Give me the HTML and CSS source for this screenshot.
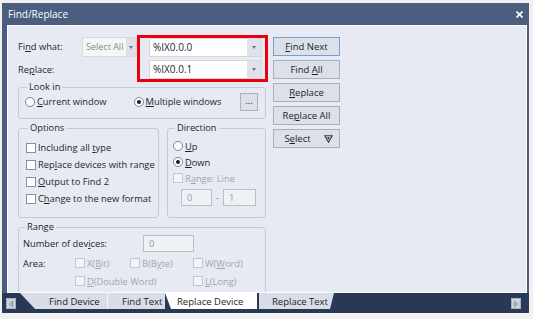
FILE: index.html
```html
<!DOCTYPE html>
<html lang="en">
<head>
  <meta charset="UTF-8">
  <title>Find/Replace</title>
  <link rel="stylesheet" href="styles.css">
</head>
<body>
  <div class="window">
    <div class="titlebar">
      <span class="title">Find/Replace</span>
      <svg class="close" width="7" height="7" viewBox="0 0 7 7"><path d="M0.5 0.5L6.5 6.5M6.5 0.5L0.5 6.5" stroke="#fff" stroke-width="1.6"/></svg>
    </div>

    <div class="client">
      <div class="main">
        <div class="left">
          <div class="search">
            <label class="lbl lbl-find">Fi<u>n</u>d what:</label>
            <div class="combo combo-off">
              <span class="combo-text">Select All</span>
              <span class="combo-btn"><i class="tri"></i></span>
            </div>
            <div class="redbox">
              <div class="combo">
                <span class="combo-text">%IX0.0.0</span>
                <span class="combo-btn"><i class="tri"></i></span>
              </div>
              <div class="combo">
                <span class="combo-text">%IX0.0.1</span>
                <span class="combo-btn"><i class="tri"></i></span>
              </div>
            </div>
            <label class="lbl lbl-replace">Re<u>p</u>lace:</label>
          </div>

          <fieldset class="group lookin">
            <legend>Look in</legend>
            <div class="lookin-row">
              <span class="opt"><i class="radio"></i><span><u>C</u>urrent window</span></span>
              <span class="opt opt-multi"><i class="radio on"></i><span><u>M</u>ultiple windows</span></span>
              <span class="dots">...</span>
            </div>
          </fieldset>

          <div class="pair">
            <fieldset class="group options">
              <legend>Options</legend>
              <div class="line"><i class="check"></i><span>Including all <u>t</u>ype</span></div>
              <div class="line"><i class="check"></i><span>Rep<u>l</u>ace devices with range</span></div>
              <div class="line"><i class="check"></i><span><u>O</u>utput to Find 2</span></div>
              <div class="line"><i class="check"></i><span>C<u>h</u>ange to the new format</span></div>
            </fieldset>
            <fieldset class="group direction">
              <legend>Direction</legend>
              <div class="dline"><i class="radio"></i><span><u>U</u>p</span></div>
              <div class="dline"><i class="radio on"></i><span><u>D</u>own</span></div>
              <div class="dline off"><i class="check check-off"></i><span>R<u>a</u>nge: Line</span></div>
              <div class="span-row">
                <span class="tbox tbox-a">0</span>
                <span class="dash">-</span>
                <span class="tbox tbox-b">1</span>
              </div>
            </fieldset>
          </div>

          <fieldset class="group range">
            <legend>Range</legend>
            <div class="count-row">
              <span class="count-lbl">Number of dev<u>i</u>ces:</span>
              <span class="tbox tbox-count">0</span>
            </div>
            <div class="area-row">
              <span class="area-lbl">Area:</span>
              <span class="area-item w55"><i class="check check-off"></i><span>X(<u>B</u>it)</span></span>
              <span class="area-item w63"><i class="check check-off"></i><span>B(B<u>y</u>te)</span></span>
              <span class="area-item"><i class="check check-off"></i><span>W(<u>W</u>ord)</span></span>
            </div>
            <div class="area-row">
              <span class="area-lbl"></span>
              <span class="area-item w118"><i class="check check-off"></i><span><u>D</u>(Double Word)</span></span>
              <span class="area-item"><i class="check check-off"></i><span><u>L</u>(Long)</span></span>
            </div>
          </fieldset>
        </div>

        <div class="buttons">
          <button class="btn btn-default"><u>F</u>ind Next</button>
          <button class="btn">Find <u>A</u>ll</button>
          <button class="btn"><u>R</u>eplace</button>
          <button class="btn">Re<u>p</u>lace All</button>
          <button class="btn btn-select"><span>S<u>e</u>lect</span>
            <svg width="9" height="8" viewBox="0 0 9 8"><path d="M0.8 0.8H8.2L4.5 7.2Z" fill="none" stroke="#333" stroke-width="1.1"/><path d="M3 2.2H6L4.5 4.8Z" fill="#333"/></svg>
          </button>
        </div>
      </div>
    </div>

    <div class="tabstrip">
      <span class="arrow"><svg width="4" height="6" viewBox="0 0 4 6"><path d="M3.5 0.5V5.5L0.5 3Z" fill="none" stroke="#7b8494" stroke-width="0.9"/></svg></span>
      <div class="tabs">
        <span class="tab tab-first">Find Device</span>
        <span class="tab tab-text">Find Text</span>
        <span class="tab tab-active">Replace Device</span>
        <span class="tab tab-last">Replace Text</span>
      </div>
      <span class="arrow arrow-right"><svg width="4" height="6" viewBox="0 0 4 6"><path d="M0.5 0.5V5.5L3.5 3Z" fill="none" stroke="#7b8494" stroke-width="0.9"/></svg></span>
    </div>
  </div>
</body>
</html>
```

FILE: styles.css
```css
* {
  box-sizing: border-box;
}
body {
  margin: 0;
  background: #f1f1f1;
  font-family: 'Open Sans', 'Noto Sans', sans-serif;
  font-size: 9.3px;
  color: #1f1f1f;
  white-space: nowrap;
}
u {
  text-decoration-thickness: 1px;
  text-underline-offset: 1px;
}
.window {
  margin: 3px 0 0 2px;
  width: 527px;
  height: 310px;
  background: #4b5e80;
  display: flex;
  flex-direction: column;
}
.titlebar {
  height: 22px;
  display: flex;
  align-items: center;
  justify-content: space-between;
  padding: 0 6px;
  color: #fff;
  font-size: 10px;
}
.close {
  margin-top: 1px;
}
.client {
  margin-left: 5px;
  width: 520px;
  height: 268px;
  border: 1px solid #fbfcfe;
  background: #e7eaf3;
  overflow: hidden;
}
.main {
  display: flex;
  gap: 5px;
  padding: 9px 0 0 10px;
}
.left {
  width: 250px;
}

/* find / replace fields */
.search {
  display: grid;
  grid-template-columns: 64px 55px 131px;
  grid-template-rows: 24px 23px;
}
.lbl {
  line-height: 14px;
}
.lbl-find {
  grid-column: 1;
  grid-row: 1;
  margin-top: 5px;
}
.lbl-replace {
  grid-column: 1;
  grid-row: 2;
  margin-top: 4px;
}
.combo {
  display: flex;
  height: 19px;
  background: #fff;
  border: 1px solid #d3d7df;
}
.combo-text {
  flex: 1;
  min-width: 0;
  overflow: hidden;
  padding-left: 3px;
  line-height: 17px;
  font-size: 10px;
}
.combo-btn {
  width: 14px;
  background: #dfe2ea;
  display: flex;
  align-items: center;
  justify-content: center;
}
.tri {
  width: 0;
  height: 0;
  border-left: 2.5px solid transparent;
  border-right: 2.5px solid transparent;
  border-top: 3px solid #6d7380;
}
.combo-off {
  grid-column: 2;
  grid-row: 1;
  margin-top: 2px;
  height: 20px;
  background: #f5f6f8;
  border-color: #d6d9e0;
  color: #8a8a8a;
}
.combo-off .combo-text {
  line-height: 18px;
  font-size: 9px;
}
.combo-off .combo-btn {
  width: 10px;
  background: #dde0e8;
}
.redbox {
  grid-column: 3;
  grid-row: 1 / 3;
  border: 3px solid #ec0010;
  padding: 0 3px 0 9px;
  display: flex;
  flex-direction: column;
  gap: 3px;
}

/* group boxes */
.group {
  margin: 0;
  min-width: 0;
  border: 1px solid #c6cbd5;
  border-radius: 3px;
}
legend {
  padding: 0 2px;
  margin-left: 2px;
  line-height: 12px;
}
.radio {
  display: inline-block;
  width: 10px;
  height: 10px;
  border: 1px solid #80868f;
  border-radius: 50%;
  background: #fff;
  margin-right: 2px;
  position: relative;
  flex: none;
}
.radio.on::after {
  content: '';
  position: absolute;
  left: 2px;
  top: 2px;
  width: 4px;
  height: 4px;
  border-radius: 50%;
  background: #1a1a1a;
}
.check {
  display: inline-block;
  width: 10px;
  height: 10px;
  border: 1px solid #8a9099;
  background: #fff;
  margin-right: 2px;
  flex: none;
}
.check-off {
  border-color: #c3c7cf;
  background: #f3f4f7;
}
.lookin {
  width: 248px;
  height: 38px;
  margin-top: -1px;
  padding: 0 7px 0 6px;
}
.lookin-row {
  display: flex;
  align-items: center;
  height: 19px;
  margin-top: -1px;
}
.opt {
  display: flex;
  align-items: center;
}
.opt-multi {
  margin-left: 27px;
}
.dots {
  margin-left: auto;
  width: 18px;
  height: 18px;
  border: 1px solid #a9afbb;
  background: #dce0e9;
  text-align: center;
  line-height: 14px;
}
.pair {
  display: flex;
  gap: 8px;
  margin-top: 3px;
}
.options {
  width: 141px;
  height: 96px;
  padding: 5px 2px 0 7px;
}
.line {
  display: flex;
  align-items: center;
  height: 17px;
}
.direction {
  width: 99px;
  height: 96px;
  padding: 4px 4px 0 5px;
}
.dline {
  display: flex;
  align-items: center;
  height: 16px;
}
.off {
  color: #a3a6ad;
}
.span-row {
  display: flex;
  align-items: center;
  margin: 3px 0 0 8px;
}
.tbox {
  height: 17px;
  border: 1px solid #b9bec8;
  background: #eff1f5;
  color: #9a9da4;
  padding-left: 5px;
  line-height: 15px;
}
.tbox-a {
  width: 31px;
}
.dash {
  width: 11px;
  text-align: center;
  color: #7a7e86;
}
.tbox-b {
  width: 33px;
}
.range {
  width: 248px;
  height: 80px;
  margin-top: 3px;
  padding: 2px 4px 0 4px;
}
.count-row {
  display: flex;
  align-items: center;
  height: 17px;
}
.count-lbl {
  width: 120px;
}
.tbox-count {
  width: 51px;
}
.area-row {
  display: flex;
  align-items: center;
  height: 14px;
  margin-top: 4px;
  color: #a3a6ad;
}
.area-lbl {
  width: 52px;
  color: #1f1f1f;
}
.area-item {
  display: flex;
  align-items: center;
}
.w55 { width: 55px; }
.w63 { width: 63px; }
.w118 { width: 118px; }

/* command buttons */
.buttons {
  display: flex;
  flex-direction: column;
  gap: 4px;
  margin-top: 2px;
  width: 67px;
}
.btn {
  height: 19px;
  padding: 0;
  border: 1px solid #a8aebb;
  background: #dce0e9;
  font-family: inherit;
  font-size: 9.5px;
  color: #1f1f1f;
}
.btn-default {
  border-color: #78a0cd;
}
.btn-select {
  display: flex;
  align-items: center;
  justify-content: center;
  gap: 13px;
  padding-left: 4px;
}

/* sheet tabs */
.tabstrip {
  height: 20px;
  background: #293955;
  display: flex;
  align-items: flex-start;
  padding-left: 4px;
}
.arrow {
  width: 10px;
  height: 11px;
  margin-top: 5px;
  background: #ccd1db;
  border: 1px solid #aab1be;
  display: flex;
  align-items: center;
  justify-content: center;
}
.arrow-right {
  margin-left: auto;
  margin-right: 8px;
}
.tabs {
  display: flex;
  height: 16px;
  margin-left: 4px;
}
.tab {
  display: flex;
  align-items: center;
  background: #d8dde7;
  font-size: 9.5px;
  color: #1e1e1e;
}
.tab-first {
  width: 87px;
  padding-left: 29px;
  clip-path: polygon(0 0, 100% 0, 100% 100%, 15px 100%);
}
.tab-text {
  width: 58px;
  padding-left: 14px;
  border-left: 1px solid #f1f3f7;
}
.tab-active {
  width: 92px;
  padding-left: 12px;
  background: #fff;
  clip-path: polygon(0 0, 100% 0, 100% 100%, 6px 100%);
}
.tab-last {
  width: 75px;
  margin-left: 2px;
  padding-left: 13px;
  clip-path: polygon(0 0, 100% 0, calc(100% - 4px) 100%, 0 100%);
}
```
